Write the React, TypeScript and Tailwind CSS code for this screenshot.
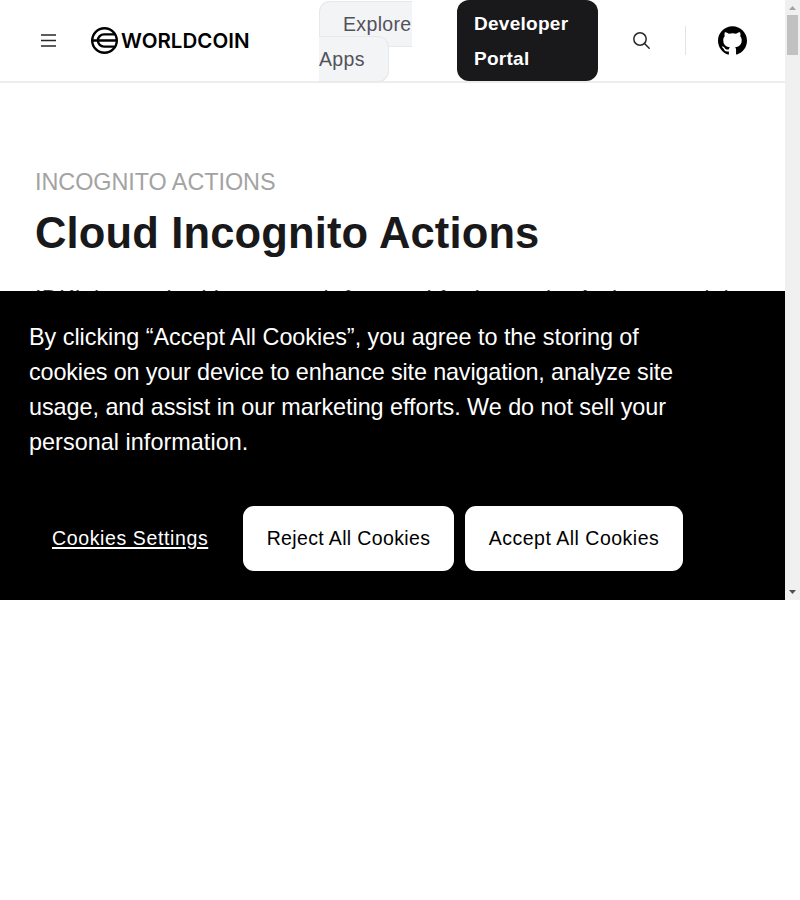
import React from "react";
import { SiGithub } from "react-icons/si";

const cookieLines = [
  { text: "By clicking “Accept All Cookies”, you agree to the storing of", track: "tracking-[-0.02px]" },
  { text: "cookies on your device to enhance site navigation, analyze site", track: "tracking-[-0.14px]" },
  { text: "usage, and assist in our marketing efforts. We do not sell your", track: "tracking-[-0.05px]" },
  { text: "personal information.", track: "tracking-[0.04px]" },
];

function Logo() {
  return (
    <div className="ml-[35px] flex items-center">
      <svg className="shrink-0" width="27" height="27" viewBox="0 0 27 27" fill="none" stroke="#000" strokeWidth="2.4">
        <circle cx="13.5" cy="13.5" r="12.3" />
        <path d="M1.2 13.5H25.8M23.6 7.4H13a6.1 6.1 0 0 0 0 12.2H23.6" />
      </svg>
      <span className="ml-[3px] w-[130px] whitespace-nowrap font-['Inter'] text-[20.5px] font-semibold leading-[27px] tracking-[0.05px] text-black">WORLDCOIN</span>
    </div>
  );
}

function Header() {
  return (
    <header className="flex h-[83px] shrink-0 items-center border-b-2 border-[#ededed] pl-[41px]">
      <svg className="shrink-0" width="15" height="13" viewBox="0 0 15 13" stroke="#27272a" strokeWidth="1.3">
        <path d="M0 1H15M0 6.5H15M0 12H15" />
      </svg>
      <Logo />
      <div className="ml-[68px] mt-[2px] w-[93px] shrink-0 text-[19.5px] leading-[35px] tracking-[0.35px] text-[#52525b]">
        <span className="rounded-[11px] border border-[#e7e8eb] bg-[#f3f4f6] px-[23px] py-[11px]">Explore Apps</span>
      </div>
      <a className="ml-[45px] h-[81px] w-[141px] shrink-0 rounded-[12px] bg-[#19191b] px-[17px] py-[5.5px] text-[19px] font-bold leading-[35px] tracking-[0.27px] text-white">Developer Portal</a>
      <svg className="ml-[35px] shrink-0" width="17" height="17" viewBox="0 0 17 17" fill="none" stroke="#27272a" strokeWidth="1.5" strokeLinecap="round">
        <circle cx="7" cy="7" r="6.2" />
        <path d="m11.5 11.5 4.7 4.7" />
      </svg>
      <div className="ml-[35px] h-[29px] w-px bg-[#e4e4e7]" />
      <SiGithub className="ml-[32px] shrink-0 text-black" size={29} />
    </header>
  );
}

function Scrollbar() {
  return (
    <div className="flex h-full w-[15px] flex-col items-center bg-[#f0f0f0]">
      <svg width="15" height="15" viewBox="0 0 15 15"><path d="M4 10h7L7.5 6z" fill="#a3a3a3" /></svg>
      <div className="h-[40px] w-[11px] bg-[#c1c1c1]" />
      <svg className="mt-auto" width="15" height="15" viewBox="0 0 15 15"><path d="M4 5h7L7.5 9z" fill="#505050" /></svg>
    </div>
  );
}

function CookieBanner() {
  return (
    <section className="absolute inset-x-0 bottom-0 h-[309px] bg-black pl-[29px] pt-[29px] text-white">
      <div className="text-[23.4px] leading-[35px]">
        {cookieLines.map((l) => (
          <p key={l.text}><span className={`whitespace-nowrap ${l.track}`}>{l.text}</span></p>
        ))}
      </div>
      <div className="mt-[46px] flex h-[65px] items-center text-[19.5px]">
        <span className="ml-[23px] w-[191px] whitespace-nowrap tracking-[0.62px] underline decoration-2 underline-offset-[2px]">Cookies Settings</span>
        <button className="h-[65px] w-[211px] whitespace-nowrap rounded-[11px] bg-white tracking-[0.36px] text-black">Reject All Cookies</button>
        <button className="ml-[11px] h-[65px] w-[218px] whitespace-nowrap rounded-[11px] bg-white tracking-[0.5px] text-black">Accept All Cookies</button>
      </div>
    </section>
  );
}

export default function App() {
  return (
    <div className="h-[900px] w-[800px] bg-white font-['Liberation_Sans',sans-serif]">
      <div className="flex h-[600px]">
        <div className="relative flex h-full w-[785px] flex-col overflow-hidden">
          <Header />
          <main className="pl-[35px] pt-[82px]">
            <div className="text-[23.4px] leading-[35px] text-[#a3a3a3]"><span className="tracking-[-0.05px]">INCOGNITO ACTIONS</span></div>
            <h1 className="mt-[7px] text-[43.5px] font-bold leading-[52px] text-[#19191b]"><span className="tracking-[0.15px]">Cloud Incognito Actions</span></h1>
            <p className="mt-[23px] whitespace-nowrap text-[23.4px] leading-[35px] tracking-[0.32px] text-[#3f3f46]">IDKit is required in your web frontend for Incognito Actions, and the</p>
          </main>
          <CookieBanner />
        </div>
        <Scrollbar />
      </div>
    </div>
  );
}
